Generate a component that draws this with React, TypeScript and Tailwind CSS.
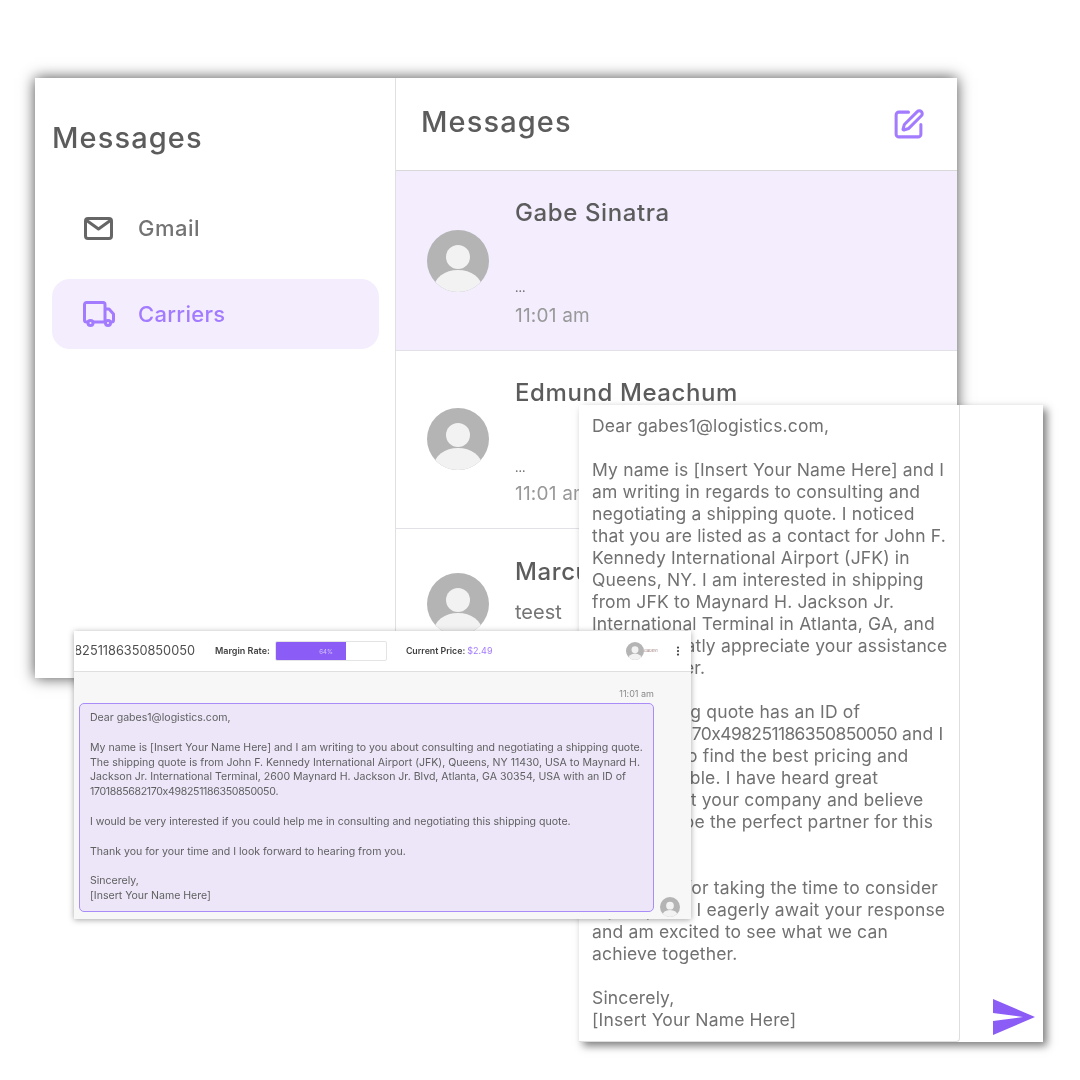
import { EllipsisVertical, SquarePen } from "lucide-react";

const quoteId = "1701885682170x498251186350850050";

const rightBefore = `Dear gabes1@logistics.com,

My name is [Insert Your Name Here] and I
am writing in regards to consulting and
negotiating a shipping quote. I noticed
that you are listed as a contact for John F.
Kennedy International Airport (JFK) in
Queens, NY. I am interested in shipping
from JFK to Maynard H. Jackson Jr.
International Terminal in Atlanta, GA, and
I would greatly appreciate your assistance
in this matter.

The shipping quote has an ID of
`;

const rightAfter = ` and I
would like to find the best pricing and
terms possible. I have heard great
things about your company and believe
you would be the perfect partner for this
shipment.

Thank you for taking the time to consider
my request. I eagerly await your response
and am excited to see what we can
achieve together.

Sincerely,
[Insert Your Name Here]`;

const bubbleBefore = `Dear gabes1@logistics.com,

My name is [Insert Your Name Here] and I am writing to you about consulting and negotiating a shipping quote.
The shipping quote is from John F. Kennedy International Airport (JFK), Queens, NY 11430, USA to Maynard H.
Jackson Jr. International Terminal, 2600 Maynard H. Jackson Jr. Blvd, Atlanta, GA 30354, USA with an ID of
`;

const bubbleAfter = `.

I would be very interested if you could help me in consulting and negotiating this shipping quote.

Thank you for your time and I look forward to hearing from you.

Sincerely,
[Insert Your Name Here]`;

function Avatar({ className }: { className: string }) {
  return (
    <svg viewBox="0 0 62 62" className={className}>
      <clipPath id="avatar-clip">
        <circle cx="31" cy="31" r="31" />
      </clipPath>
      <g clipPath="url(#avatar-clip)">
        <rect width="62" height="62" fill="#b4b4b4" />
        <circle cx="31" cy="27" r="12" fill="#f2f2f2" />
        <ellipse cx="31" cy="58" rx="24" ry="18" fill="#f2f2f2" />
      </g>
    </svg>
  );
}

function MailIcon() {
  return (
    <svg viewBox="0 0 29 23" fill="none" stroke="currentColor" strokeWidth="3" strokeLinejoin="round" className="h-[23px] w-[29px] shrink-0">
      <rect x="1.5" y="1.5" width="26" height="20" rx="2.5" />
      <path d="M2 3l12.5 9L27 3" />
    </svg>
  );
}

function TruckIcon() {
  return (
    <svg viewBox="0 0 32 26" fill="none" stroke="currentColor" strokeWidth="3" strokeLinejoin="round" className="h-[26px] w-8 shrink-0">
      <path d="M5 21H3.5a2 2 0 0 1-2-2V3.5a2 2 0 0 1 2-2h16.5a2 2 0 0 1 2 2V21H10" />
      <path d="M22 8h4l4.5 5v6a2 2 0 0 1-2 2h-1M22 21h-1" />
      <circle cx="7.5" cy="22" r="2.5" fill="#f3edfe" />
      <circle cx="25" cy="22" r="2.5" fill="#f3edfe" />
    </svg>
  );
}

function ThreadRow({ name, selected, className, avatarClass, timeClass }: { name: string; selected?: boolean; className: string; avatarClass: string; timeClass: string }) {
  return (
    <div className={`flex shrink-0 border-b border-[#e3e1e8] pl-[31px] pr-4 ${selected ? "bg-[#f3edfe]" : "bg-white"} ${className}`}>
      <Avatar className={`h-[62px] w-[62px] shrink-0 ${avatarClass}`} />
      <div className="ml-[26px] flex flex-col whitespace-nowrap">
        <div className="mt-[26px] text-[24px] leading-[32px] font-medium tracking-[0.6px] text-[#5c5c5c]">{name}</div>
        <div className="mt-[47px] h-6 text-[11px] leading-6 font-semibold text-[#6a6a6a]">...</div>
        <div className={`text-[19px] leading-7 tracking-[0.2px] text-[#999999] ${timeClass}`}>11:01 am</div>
      </div>
    </div>
  );
}

export default function App() {
  return (
    <div className="relative h-[1080px] w-[1080px] overflow-hidden bg-white font-['Inter','Liberation_Sans',sans-serif] [font-feature-settings:'calt'_0] blur-[0.6px]">
      {/* Inbox window */}
      <div className="absolute left-[35px] top-[78px] flex h-[600px] w-[922px] overflow-hidden bg-white shadow-[0_0_14px_rgba(0,0,0,0.7)]">
        <aside className="w-[361px] shrink-0 border-r border-[#e0e0e0] px-[17px]">
          <h2 className="mt-[40px] text-[29px] leading-10 font-medium tracking-[1.1px] text-[#5c5c5c]">Messages</h2>
          <div className="mt-[35px] flex h-[70px] items-center gap-[25px] pl-[32px] text-[#666666]">
            <MailIcon />
            <span className="text-[22px] font-medium tracking-[0.5px] text-[#737373]">Gmail</span>
          </div>
          <div className="mt-[16px] flex h-[70px] w-[327px] items-center gap-[23px] rounded-[18px] bg-[#f3edfe] pl-[31px] text-[#a37bff]">
            <TruckIcon />
            <span className="text-[22px] font-medium tracking-[0.3px]">Carriers</span>
          </div>
        </aside>
        <section className="flex min-w-0 flex-1 flex-col">
          <header className="flex h-[93px] shrink-0 items-center justify-between border-b border-[#d9d9d9] pl-[25px] pr-[32px]">
            <h2 className="mb-[4px] text-[29px] font-medium tracking-[1.1px] text-[#5c5c5c]">Messages</h2>
            <SquarePen size={33} strokeWidth={2.2} className="text-[#a37bff]" />
          </header>
          <ThreadRow selected name="Gabe Sinatra" className="h-[180px]" avatarClass="mt-[59px]" timeClass="mt-[2px]" />
          <ThreadRow name="Edmund Meachum" className="h-[178px]" avatarClass="mt-[57px]" timeClass="mt-0" />
          <div className="flex flex-1 pl-[31px]">
            <Avatar className="mt-[44px] h-[62px] w-[62px] shrink-0" />
            <div className="ml-[26px] whitespace-nowrap">
              <div className="mt-[27px] text-[24px] leading-[32px] font-medium tracking-[0.6px] text-[#5c5c5c]">Marcus Reed</div>
              <div className="mt-[10px] text-[20px] leading-7 text-[#757575]">teest</div>
            </div>
          </div>
        </section>
      </div>

      {/* Composer window */}
      <div className="absolute left-[579px] top-[405px] flex h-[637px] w-[464px] bg-white shadow-[4px_4px_8px_rgba(0,0,0,0.5)]">
        <div className="w-[381px] shrink-0 rounded-br border-r border-b border-[#dedede] pl-[13px] pt-[10px] text-[17.5px] leading-[22px] tracking-[0.16px] whitespace-pre text-[#717171]">
          {rightBefore}
          <span className="tracking-[-0.62px]">{quoteId}</span>
          {rightAfter}
        </div>
        <div className="flex flex-1 items-end justify-end pb-[1px] pr-[6px]">
          <svg viewBox="0 0 24 24" className="h-12 w-12 fill-[#8b5cf6]">
            <path d="M2.01 21 23 12 2.01 3 2 10l15 2-15 2z" />
          </svg>
        </div>
      </div>

      {/* Quote chat window */}
      <div className="absolute left-[74px] top-[631px] flex h-[288px] w-[617px] flex-col bg-[#f7f7f7] shadow-[0_1px_6px_rgba(0,0,0,0.35)]">
        <header className="flex h-[41px] shrink-0 items-center border-b border-[#dfdfdf] bg-white pl-[2px] pr-[7px] whitespace-nowrap">
          <div className="flex w-[119px] shrink-0 justify-end overflow-hidden text-[12.75px] text-[#4f4f4f]">
            <span>{quoteId}</span>
          </div>
          <span className="ml-[20px] text-[9px] font-semibold text-[#3f3f3f]">Margin Rate:</span>
          <div className="ml-[5px] h-[20px] w-[112px] overflow-hidden rounded-[2px] border border-[#e4e4e4] bg-white">
            <div className="flex h-full w-[64%] items-center justify-center bg-[#8b5cf6] pl-[30px] text-[6px] text-[#d5c6fb]">64%</div>
          </div>
          <span className="ml-[19px] text-[8.8px] font-semibold text-[#3f3f3f]">Current Price:</span>
          <span className="ml-[2px] text-[9px] text-[#a37bff]">$2.49</span>
          <Avatar className="ml-auto h-[18px] w-[18px] shrink-0" />
          <span className="w-[14px] text-[4px] text-[#a08080]">Gabes1</span>
          <EllipsisVertical size={12} strokeWidth={2.5} className="ml-[14px] text-[#444444]" />
        </header>
        <div className="mr-[37px] mt-[16px] text-right text-[9px] leading-3 text-[#8a8a8a]">11:01 am</div>
        <div className="relative mt-[3px] ml-[5px] w-[575px] rounded-[5px] border border-[#a98cf8] bg-[#ede6f9] pl-[10px] pt-[7px] pb-[7px] text-[10.55px] leading-[14.85px] whitespace-pre text-[#5f5f5f]">
          {bubbleBefore}
          <span className="tracking-[-0.32px]">{quoteId}</span>
          {bubbleAfter}
        </div>
        <Avatar className="absolute left-[586px] top-[266px] h-5 w-5" />
      </div>
    </div>
  );
}
